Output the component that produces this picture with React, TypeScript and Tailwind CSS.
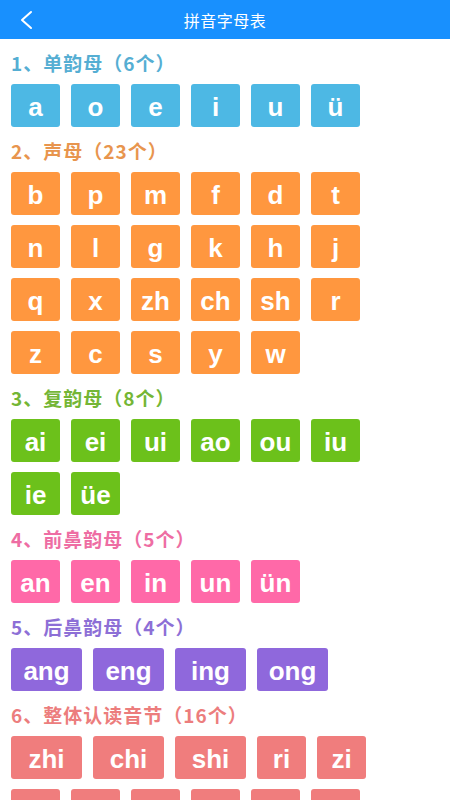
import React from 'react';

type Section = {
  title: string;
  titleColor: string;
  tileColor: string;
  items: string[];
};

const sections: Section[] = [
  {
    title: '1、单韵母（6个）',
    titleColor: 'text-[#55aed3]',
    tileColor: 'bg-[#4db8e4]',
    items: ['a', 'o', 'e', 'i', 'u', 'ü'],
  },
  {
    title: '2、声母（23个）',
    titleColor: 'text-[#e8954e]',
    tileColor: 'bg-[#ff973f]',
    items: ['b', 'p', 'm', 'f', 'd', 't', 'n', 'l', 'g', 'k', 'h', 'j', 'q', 'x', 'zh', 'ch', 'sh', 'r', 'z', 'c', 's', 'y', 'w'],
  },
  {
    title: '3、复韵母（8个）',
    titleColor: 'text-[#74b635]',
    tileColor: 'bg-[#6cc11b]',
    items: ['ai', 'ei', 'ui', 'ao', 'ou', 'iu', 'ie', 'üe'],
  },
  {
    title: '4、前鼻韵母（5个）',
    titleColor: 'text-[#ee6da3]',
    tileColor: 'bg-[#ff69a8]',
    items: ['an', 'en', 'in', 'un', 'ün'],
  },
  {
    title: '5、后鼻韵母（4个）',
    titleColor: 'text-[#8d6fd6]',
    tileColor: 'bg-[#8f68dc]',
    items: ['ang', 'eng', 'ing', 'ong'],
  },
  {
    title: '6、整体认读音节（16个）',
    titleColor: 'text-[#ec7d7d]',
    tileColor: 'bg-[#f07d7d]',
    items: ['zhi', 'chi', 'shi', 'ri', 'zi', 'ci', 'si', 'yi', 'wu', 'yu', 'ye', 'yue', 'yuan', 'yin', 'yun', 'ying'],
  },
];

const Tile: React.FC<{ text: string; color: string }> = ({ text, color }) => {
  const wide = text.length >= 3;
  return (
    <div
      className={`${color} ${wide ? 'w-[71px]' : 'w-[49px]'} h-[43px] rounded-[3px] flex items-center justify-center text-white font-bold text-[26px] leading-none pt-[3px]`}
      style={{ fontFamily: '"Liberation Sans", Arial, sans-serif' }}
    >
      {text}
    </div>
  );
};

export default function App() {
  return (
    <div
      className="w-[450px] h-[800px] overflow-hidden bg-white"
      style={{ fontFamily: '"Noto Sans CJK SC", "Noto Sans", sans-serif' }}
    >
      <div className="relative h-[39px] bg-[#1890fe] flex items-center justify-center">
        <svg
          className="absolute left-[19px] top-[10px]"
          width="16"
          height="20"
          viewBox="0 0 16 20"
          fill="none"
          stroke="white"
          strokeWidth="2"
          strokeLinecap="round"
          strokeLinejoin="round"
        >
          <polyline points="12,2 3,10 12,18" />
        </svg>
        <span className="text-white text-[16px] tracking-[0.5px]">拼音字母表</span>
      </div>

      <div className="pl-[11px]">
        {sections.map((s) => (
          <div key={s.title}>
            <div className={`h-[45px] pt-[3px] flex items-center text-[19px] font-bold tracking-[1px] ${s.titleColor}`}>
              {s.title}
            </div>
            <div className="w-[375px] flex flex-wrap gap-x-[11px] gap-y-[10px]">
              {s.items.map((it) => (
                <Tile key={it} text={it} color={s.tileColor} />
              ))}
            </div>
          </div>
        ))}
      </div>
    </div>
  );
}
